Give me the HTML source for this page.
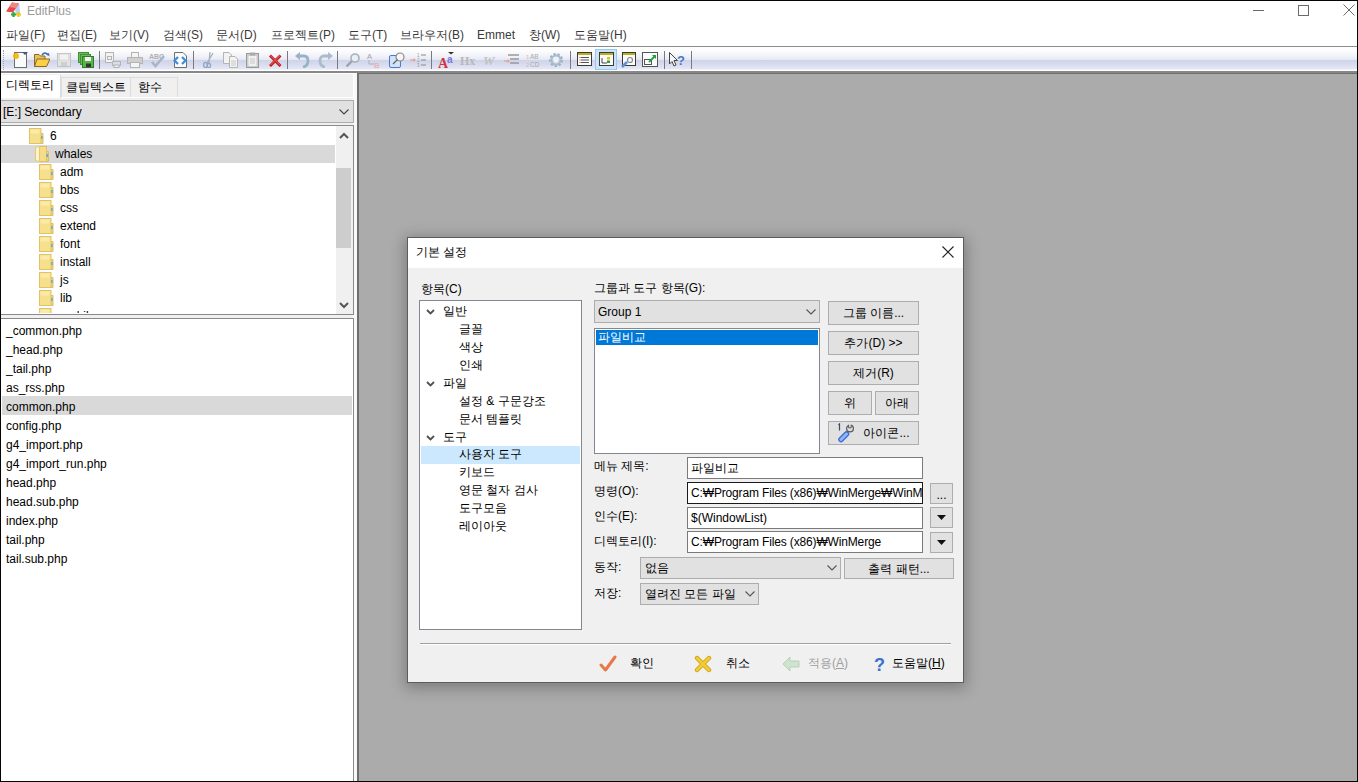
<!DOCTYPE html>
<html><head><meta charset="utf-8">
<style>
*{box-sizing:border-box;margin:0;padding:0}
html,body{width:1358px;height:782px;overflow:hidden;background:#fff;font-family:"Liberation Sans",sans-serif;font-size:12px;color:#000}
.a{position:absolute}
.t{position:absolute;white-space:nowrap;line-height:14px}
.mi{position:absolute;top:28px;line-height:14px;color:#3a3a3a;white-space:nowrap}
.ic{position:absolute;top:52px;width:16px;height:16px}
.sep{position:absolute;top:51px;width:1px;height:18px;background:#7a7a7a}
.fr{position:absolute;left:6px;height:19px;line-height:19px;padding-top:2px;white-space:nowrap}
.tr{position:absolute;height:18px;line-height:18px;padding-top:1px;white-space:nowrap}
.fd{position:absolute;width:15px;height:15px}
.btn{position:absolute;background:#e1e1e1;border:1px solid #adadad;text-align:center;white-space:nowrap}
.lbl{position:absolute;left:594px;white-space:nowrap;line-height:14px}
.fld{position:absolute;left:687px;width:236px;height:22px;background:#fff;border:1px solid #7a7a7a;padding-left:3px;line-height:20px;white-space:nowrap;overflow:hidden}
</style></head><body>
<!-- window border -->
<div class="a" style="left:0;top:0;width:1358px;height:1px;background:#050505"></div>
<div class="a" style="left:0;top:0;width:1px;height:782px;background:#050505"></div>
<div class="a" style="left:0;top:781px;width:1358px;height:1px;background:#050505"></div>
<div class="a" style="left:1357px;top:0;width:1px;height:782px;background:#050505"></div>

<!-- title -->
<svg class="a" style="left:0;top:0" width="24" height="20" viewBox="0 0 24 20"><path d="M15 5 L19.5 4 L20 14 L15.5 14 Z" fill="#b8d4ee"/><path d="M6 11.5 L12 2.5 L19 3.5 L13 12.5 Z" fill="#e84848"/><path d="M9 7 L12 2.5 L19 3.5 L16 8 Z" fill="#f08888"/><path d="M13.5 12 V17 M11 14.5 H16" stroke="#2fa83a" stroke-width="2.2"/><path d="M18.5 12 V17 M16 14.5 H21" stroke="#f0c818" stroke-width="2.2"/></svg>
<div class="t" style="left:27px;top:4px;color:#9a9a9a;font-size:12px">EditPlus</div>
<!-- window controls -->
<div class="a" style="left:1253px;top:10px;width:11px;height:1px;background:#6a6a6a"></div>
<div class="a" style="left:1298px;top:5px;width:11px;height:11px;border:1px solid #6a6a6a"></div>
<svg class="a" style="left:1343px;top:4px" width="12" height="12" viewBox="0 0 12 12"><path d="M0.5 0.5 L11.5 11.5 M11.5 0.5 L0.5 11.5" stroke="#6a6a6a" stroke-width="1"/></svg>

<!-- menu -->
<div class="mi" style="left:6px">파일(F)</div>
<div class="mi" style="left:57px">편집(E)</div>
<div class="mi" style="left:109px">보기(V)</div>
<div class="mi" style="left:163px">검색(S)</div>
<div class="mi" style="left:216px">문서(D)</div>
<div class="mi" style="left:271px">프로젝트(P)</div>
<div class="mi" style="left:348px">도구(T)</div>
<div class="mi" style="left:400px">브라우저(B)</div>
<div class="mi" style="left:477px">Emmet</div>
<div class="mi" style="left:529px">창(W)</div>
<div class="mi" style="left:574px">도움말(H)</div>
<div class="a" style="left:1px;top:46px;width:1356px;height:1px;background:#8c8c8c"></div>

<!-- toolbar -->
<div class="a" style="left:1px;top:47px;width:1356px;height:24px;background:linear-gradient(#ffffff 0%,#fbfbfd 20%,#eceef7 45%,#e6e8f5 52%,#cfd4e8 56%,#d9ddef 75%,#e6e8f5 92%,#ffffff 96%)"></div>
<div class="a" style="left:1px;top:71px;width:1356px;height:2px;background:#878787"></div>
<div class="a" style="left:3px;top:50px;width:1px;height:20px;border-left:1px dotted #9aa"></div>
<div id="tb"><svg class="a" style="left:12px;top:52px" width="16" height="16" viewBox="0 0 16 16"><rect x="2.5" y="0.5" width="12" height="15" fill="#fbfbfb" stroke="#6e6e6e"/><circle cx="4" cy="4" r="3" fill="#f7b400" opacity="0.9"/><path d="M10 0 H16 L13 3 Z" fill="#3a5a8a"/></svg><svg class="a" style="left:34px;top:52px" width="16" height="16" viewBox="0 0 16 16"><path d="M0.5 2.5 H5 L6.5 4 H11 V14.5 H0.5 Z" fill="#e8c25a" stroke="#8a6a2a"/><path d="M3 7 H16 L12.5 14.5 H0.5 Z" fill="#fbd046" stroke="#8a6a2a"/><path d="M8 3 Q11 -1 14 3" stroke="#3a6ab0" stroke-width="1.5" fill="none"/><path d="M12.5 2 L15.5 4.5 L15 1 Z" fill="#3a6ab0"/></svg><svg class="a" style="left:56px;top:52px" width="16" height="16" viewBox="0 0 16 16"><rect x="1.5" y="1.5" width="13" height="13" fill="#e2e2e2" stroke="#c2c2c2"/><rect x="3.5" y="2" width="9" height="6" fill="#f2f2f2" stroke="#d0d0d0" stroke-width="0.6"/><rect x="5" y="10" width="6" height="4" fill="#cfcfcf"/></svg><svg class="a" style="left:78px;top:52px" width="16" height="16" viewBox="0 0 16 16"><rect x="0.5" y="0.5" width="10" height="10" fill="#6bbf5a" stroke="#3e8f35"/><rect x="2.5" y="2.5" width="10" height="10" fill="#6bbf5a" stroke="#3e8f35"/><rect x="4.5" y="4.5" width="11" height="11" fill="#5cb24a" stroke="#2f7d28"/><rect x="7" y="5" width="6" height="4" fill="#f2f2f2"/><rect x="8" y="11.5" width="5" height="3.5" fill="#333"/></svg><div class="sep" style="left:99px"></div><svg class="a" style="left:105px;top:52px" width="16" height="16" viewBox="0 0 16 16"><rect x="0.5" y="0.5" width="8" height="10" fill="#f2f2f2" stroke="#b4b4b4"/><rect x="2.5" y="4.5" width="4" height="3" fill="none" stroke="#b4b4b4"/><rect x="7.5" y="9.5" width="8" height="4" fill="#dedede" stroke="#b4b4b4"/><rect x="9" y="13" width="5" height="2.5" fill="#eee" stroke="#b4b4b4"/></svg><svg class="a" style="left:127px;top:52px" width="16" height="16" viewBox="0 0 16 16"><rect x="4.5" y="0.5" width="7" height="5" fill="#f5f5f5" stroke="#b4b4b4"/><rect x="0.5" y="5.5" width="15" height="6" fill="#cfcfcf" stroke="#b4b4b4"/><rect x="3.5" y="10.5" width="9" height="5" fill="#f5f5f5" stroke="#b4b4b4"/></svg><svg class="a" style="left:149px;top:52px" width="16" height="16" viewBox="0 0 16 16"><text x="0" y="7" font-size="7" font-family="Liberation Sans" font-weight="bold" fill="#b0b0b0">ABC</text><path d="M3 10 L6.5 14 L15 4" stroke="#a8b4c8" stroke-width="2.5" fill="none"/></svg><svg class="a" style="left:172px;top:52px" width="16" height="16" viewBox="0 0 16 16"><path d="M2.5 0.5 H11 L14.5 4 V15.5 H2.5 Z" fill="#fafafa" stroke="#6e6e6e"/><path d="M6 5 L2.5 8.5 L6 12 M10 5 L13.5 8.5 L10 12" stroke="#3b8de0" stroke-width="2.2" fill="none"/></svg><div class="sep" style="left:193px"></div><svg class="a" style="left:201px;top:52px" width="16" height="16" viewBox="0 0 16 16"><path d="M12 1 L6 11 M9 0 L8 11" stroke="#a8b0bc" stroke-width="1.3"/><ellipse cx="4.5" cy="13" rx="1.8" ry="2.6" fill="none" stroke="#8fa6c8" stroke-width="1.4"/><ellipse cx="8" cy="13.5" rx="1.6" ry="2.2" fill="none" stroke="#8fa6c8" stroke-width="1.3"/></svg><svg class="a" style="left:223px;top:52px" width="16" height="16" viewBox="0 0 16 16"><path d="M0.5 0.5 H6 L8.5 3 V11.5 H0.5 Z" fill="#f3f3f3" stroke="#b4b4b4"/><path d="M6.5 4.5 H12 L14.5 7 V15.5 H6.5 Z" fill="#f3f3f3" stroke="#b4b4b4"/><path d="M8 9 H13 M8 11 H13 M8 13 H13" stroke="#c8c8c8"/></svg><svg class="a" style="left:245px;top:52px" width="16" height="16" viewBox="0 0 16 16"><rect x="1.5" y="1.5" width="12" height="14" fill="#cccccc" stroke="#9a9a9a"/><rect x="3.5" y="4" width="8" height="10" fill="#f0f0f0"/><rect x="5" y="0.5" width="5" height="3" fill="#aaa"/><path d="M5 7 H10 M5 9 H10 M5 11 H10" stroke="#c8c8c8"/></svg><svg class="a" style="left:268px;top:52px" width="16" height="16" viewBox="0 0 16 16"><path d="M2 3.5 L12.5 14 M12.5 3.5 L2 14" stroke="#b81818" stroke-width="2.8"/><path d="M2.5 3.5 L12 13 M12 3.5 L2.5 13" stroke="#e84a4a" stroke-width="1.2"/></svg><div class="sep" style="left:287px"></div><svg class="a" style="left:295px;top:52px" width="16" height="16" viewBox="0 0 16 16"><path d="M3 4 H9 Q13 4 13 9 Q13 14 8 15" stroke="#98b2c8" stroke-width="2.8" fill="none"/><path d="M0 4 L5 0 V8 Z" fill="#98b2c8"/></svg><svg class="a" style="left:317px;top:52px" width="16" height="16" viewBox="0 0 16 16"><path d="M13 4 H7 Q3 4 3 9 Q3 14 8 15" stroke="#a8bccc" stroke-width="2.8" fill="none"/><path d="M16 4 L11 0 V8 Z" fill="#a8bccc"/></svg><div class="sep" style="left:337px"></div><svg class="a" style="left:345px;top:52px" width="16" height="16" viewBox="0 0 16 16"><circle cx="10" cy="6" r="4" fill="#e8eef4" stroke="#a8b0b8" stroke-width="1.6"/><path d="M7 9 L1.5 14.5" stroke="#9aa4ae" stroke-width="2.4"/></svg><svg class="a" style="left:366px;top:52px" width="16" height="16" viewBox="0 0 16 16"><text x="1" y="7" font-size="7.5" font-family="Liberation Sans" fill="#a0a0a0">A</text><path d="M3 8 V12 H8" stroke="#b0b0b0" fill="none"/><text x="8" y="15.5" font-size="8" font-family="Liberation Sans" fill="#e8a0a0">B</text></svg><svg class="a" style="left:389px;top:52px" width="16" height="16" viewBox="0 0 16 16"><rect x="0.5" y="3.5" width="11" height="12" rx="1.5" fill="#d2e2f8" stroke="#4a7ac8"/><circle cx="11" cy="5" r="4" fill="#f5f5f5" stroke="#888" stroke-width="1.2"/><path d="M8.5 7.5 L4 12" stroke="#666" stroke-width="1.3"/></svg><svg class="a" style="left:410px;top:52px" width="16" height="16" viewBox="0 0 16 16"><path d="M0 8 H5" stroke="#e8a090" stroke-width="1.2"/><path d="M3.5 6 L6 8 L3.5 10Z" fill="#e8a090"/><text x="7" y="5" font-size="4.5" fill="#999" font-family="Liberation Sans">1</text><text x="7" y="10" font-size="4.5" fill="#999" font-family="Liberation Sans">2</text><text x="7" y="15" font-size="4.5" fill="#999" font-family="Liberation Sans">3</text><path d="M11 3 H16 M11 8 H16 M11 13 H16" stroke="#8a8a8a" stroke-width="1.2"/></svg><div class="sep" style="left:431px"></div><svg class="a" style="left:438px;top:52px" width="16" height="16" viewBox="0 0 16 16"><text x="0" y="15.5" font-size="14" font-family="Liberation Serif" font-weight="bold" fill="#d0343a">A</text><text x="9" y="11" font-size="10" font-family="Liberation Sans" font-weight="bold" fill="#7a78d8">a</text><path d="M10 0 H16 L13 2.5Z" fill="#333"/></svg><svg class="a" style="left:460px;top:52px" width="18" height="16" viewBox="0 0 18 16"><text x="0" y="13" font-size="12" font-family="Liberation Serif" font-weight="bold" fill="#b8b8b8">Hx</text></svg><svg class="a" style="left:483px;top:52px" width="16" height="16" viewBox="0 0 16 16"><text x="0" y="13" font-size="13" font-family="Liberation Serif" font-weight="bold" font-style="italic" fill="#c0c0c0">W</text></svg><svg class="a" style="left:504px;top:52px" width="16" height="16" viewBox="0 0 16 16"><path d="M4 3 H15 M6 7 H15 M6 11 H15" stroke="#999" stroke-width="1.4"/><path d="M0 9 H5" stroke="#e8a090" stroke-width="1.2"/><path d="M3.5 7 L6 9 L3.5 11Z" fill="#e8a090"/></svg><svg class="a" style="left:526px;top:52px" width="16" height="16" viewBox="0 0 16 16"><text x="0" y="7" font-size="6" fill="#e8b0a8" font-family="Liberation Sans">1</text><text x="0" y="14.5" font-size="6" fill="#e8b0a8" font-family="Liberation Sans">2</text><text x="4" y="7" font-size="6.5" fill="#a8a8a8" font-family="Liberation Sans">AB</text><text x="4" y="14.5" font-size="6.5" fill="#a8a8a8" font-family="Liberation Sans">CD</text></svg><svg class="a" style="left:548px;top:52px" width="16" height="16" viewBox="0 0 16 16"><circle cx="8" cy="8" r="5.5" fill="none" stroke="#9cb0c4" stroke-width="3" stroke-dasharray="2.2 1.6"/><circle cx="8" cy="8" r="4.5" fill="none" stroke="#a8bccc" stroke-width="2"/><circle cx="8" cy="8" r="2.5" fill="#eef2f6"/></svg><div class="sep" style="left:570px"></div><svg class="a" style="left:577px;top:52px" width="16" height="16" viewBox="0 0 16 16"><rect x="0.5" y="0.5" width="14" height="13" fill="#fbfbfb" stroke="#3a3a3a"/><rect x="1" y="1" width="13" height="2" fill="#b8b020"/><path d="M4 5.5 H12 M4 8 H12 M4 10.5 H12" stroke="#555"/><path d="M2.5 5.5 H3.5 M2.5 8 H3.5 M2.5 10.5 H3.5" stroke="#d03030"/></svg><div class="a" style="left:595px;top:49px;width:22px;height:21px;background:#cce4f7;border:1px solid #99c9ef"></div><svg class="a" style="left:599px;top:52px" width="16" height="16" viewBox="0 0 16 16"><rect x="0.5" y="0.5" width="14" height="13" fill="#fbfbfb" stroke="#3a3a3a"/><rect x="1" y="1" width="13" height="2" fill="#b8b020"/><path d="M3 6 V11 H8" stroke="#444" fill="none"/><rect x="8" y="5" width="3" height="2.5" fill="#e0c020"/><rect x="8" y="8.5" width="3" height="2.5" fill="#30a030"/></svg><svg class="a" style="left:621px;top:52px" width="16" height="16" viewBox="0 0 16 16"><rect x="1.5" y="0.5" width="13" height="13" fill="#fbfbfb" stroke="#3a3a3a"/><rect x="2" y="1" width="12" height="2" fill="#b8b020"/><path d="M1 15 L6 10" stroke="#5b8fd8" stroke-width="2.6"/><circle cx="9" cy="8" r="2.5" fill="none" stroke="#888" stroke-width="1.2"/></svg><svg class="a" style="left:642px;top:52px" width="16" height="16" viewBox="0 0 16 16"><rect x="0.5" y="0.5" width="15" height="14" fill="#fbfbfb" stroke="#555"/><rect x="2.5" y="7.5" width="7" height="5" fill="none" stroke="#555"/><path d="M7 10 L13 4" stroke="#20a040" stroke-width="1.8"/><path d="M10 3 H14 V7Z" fill="#20a040"/></svg><div class="sep" style="left:664px"></div><svg class="a" style="left:669px;top:52px" width="17" height="16" viewBox="0 0 17 16"><path d="M0.5 0.5 V12 L3 9.5 L5 14 L7 13 L5 8.5 H8.5 Z" fill="#f5f5f5" stroke="#444"/><text x="8" y="13" font-size="13" font-weight="bold" fill="#4a78c8" font-family="Liberation Sans">?</text></svg><div class="sep" style="left:691px"></div></div>

<!-- left panel -->
<div class="a" style="left:1px;top:73px;width:352px;height:708px;background:#f0f0f0;border-top:1px solid #fff"></div>
<!-- tabs -->
<div class="a" style="left:1px;top:97px;width:352px;height:1px;background:#fff"></div>
<div class="a" style="left:61px;top:77px;width:70px;height:20px;background:#f0f0f0;border:1px solid #dcdcdc;border-bottom:none"></div>
<div class="a" style="left:131px;top:77px;width:47px;height:20px;background:#f0f0f0;border:1px solid #dcdcdc;border-bottom:none;border-left:none"></div>
<div class="a" style="left:1px;top:75px;width:60px;height:23px;background:#fff;border-right:1px solid #dcdcdc"></div>
<div class="t" style="left:6px;top:78px">디렉토리</div>
<div class="t" style="left:66px;top:80px">클립텍스트</div>
<div class="t" style="left:138px;top:80px">함수</div>
<!-- drive combo -->
<div class="a" style="left:1px;top:100px;width:353px;height:23px;background:#e1e1e1;border:1px solid #adadad;border-left:none"></div>
<div class="t" style="left:3px;top:105px">[E:] Secondary</div>
<svg class="a" style="left:339px;top:109px" width="10" height="6" viewBox="0 0 10 6"><path d="M0.5 0.5 L5 5 L9.5 0.5" stroke="#444" fill="none" stroke-width="1.1"/></svg>
<!-- tree -->
<div class="a" style="left:1px;top:125px;width:353px;height:190px;background:#fff;border:1px solid #8a8a8a;border-left:none"></div>
<div class="a" style="left:1px;top:145px;width:334px;height:18px;background:#d9d9d9"></div>
<div class="a" style="left:1px;top:126px;width:335px;height:187px;overflow:hidden"><svg class="a" style="left:28px;top:2px" width="15" height="16" viewBox="0 0 15 16"><path d="M11.5 5.5 H14 V15.5 H11.5Z" fill="#ecd27c" stroke="#dcbc62"/><rect x="0.5" y="0.5" width="11.5" height="15" fill="#f7e08c" stroke="#e2c266"/><rect x="1.5" y="1.5" width="9" height="4" fill="#fbeaa8"/><rect x="12.2" y="8" width="1.3" height="3" fill="#4aa8e8"/></svg><div class="tr" style="left:49px;top:0px">6</div><svg class="a" style="left:34px;top:20px" width="15" height="16" viewBox="0 0 15 16"><path d="M11 5.5 H13.5 V15.5 H11Z" fill="#ecd27c" stroke="#dcbc62"/><rect x="4.5" y="0.5" width="7" height="15" fill="#f5dc86" stroke="#e0c066"/><path d="M0.5 1.5 L4.5 0.5 V15.5 L0.5 14.5Z" fill="#fdf2c8" stroke="#e2c878"/><rect x="11.6" y="8" width="1.3" height="3" fill="#4aa8e8"/></svg><div class="tr" style="left:54px;top:18px">whales</div><svg class="a" style="left:38px;top:38px" width="15" height="16" viewBox="0 0 15 16"><path d="M11.5 5.5 H14 V15.5 H11.5Z" fill="#ecd27c" stroke="#dcbc62"/><rect x="0.5" y="0.5" width="11.5" height="15" fill="#f7e08c" stroke="#e2c266"/><rect x="1.5" y="1.5" width="9" height="4" fill="#fbeaa8"/><rect x="12.2" y="8" width="1.3" height="3" fill="#4aa8e8"/></svg><div class="tr" style="left:59px;top:36px">adm</div><svg class="a" style="left:38px;top:56px" width="15" height="16" viewBox="0 0 15 16"><path d="M11.5 5.5 H14 V15.5 H11.5Z" fill="#ecd27c" stroke="#dcbc62"/><rect x="0.5" y="0.5" width="11.5" height="15" fill="#f7e08c" stroke="#e2c266"/><rect x="1.5" y="1.5" width="9" height="4" fill="#fbeaa8"/><rect x="12.2" y="8" width="1.3" height="3" fill="#4aa8e8"/></svg><div class="tr" style="left:59px;top:54px">bbs</div><svg class="a" style="left:38px;top:74px" width="15" height="16" viewBox="0 0 15 16"><path d="M11.5 5.5 H14 V15.5 H11.5Z" fill="#ecd27c" stroke="#dcbc62"/><rect x="0.5" y="0.5" width="11.5" height="15" fill="#f7e08c" stroke="#e2c266"/><rect x="1.5" y="1.5" width="9" height="4" fill="#fbeaa8"/><rect x="12.2" y="8" width="1.3" height="3" fill="#4aa8e8"/></svg><div class="tr" style="left:59px;top:72px">css</div><svg class="a" style="left:38px;top:92px" width="15" height="16" viewBox="0 0 15 16"><path d="M11.5 5.5 H14 V15.5 H11.5Z" fill="#ecd27c" stroke="#dcbc62"/><rect x="0.5" y="0.5" width="11.5" height="15" fill="#f7e08c" stroke="#e2c266"/><rect x="1.5" y="1.5" width="9" height="4" fill="#fbeaa8"/><rect x="12.2" y="8" width="1.3" height="3" fill="#4aa8e8"/></svg><div class="tr" style="left:59px;top:90px">extend</div><svg class="a" style="left:38px;top:110px" width="15" height="16" viewBox="0 0 15 16"><path d="M11.5 5.5 H14 V15.5 H11.5Z" fill="#ecd27c" stroke="#dcbc62"/><rect x="0.5" y="0.5" width="11.5" height="15" fill="#f7e08c" stroke="#e2c266"/><rect x="1.5" y="1.5" width="9" height="4" fill="#fbeaa8"/><rect x="12.2" y="8" width="1.3" height="3" fill="#4aa8e8"/></svg><div class="tr" style="left:59px;top:108px">font</div><svg class="a" style="left:38px;top:128px" width="15" height="16" viewBox="0 0 15 16"><path d="M11.5 5.5 H14 V15.5 H11.5Z" fill="#ecd27c" stroke="#dcbc62"/><rect x="0.5" y="0.5" width="11.5" height="15" fill="#f7e08c" stroke="#e2c266"/><rect x="1.5" y="1.5" width="9" height="4" fill="#fbeaa8"/><rect x="12.2" y="8" width="1.3" height="3" fill="#4aa8e8"/></svg><div class="tr" style="left:59px;top:126px">install</div><svg class="a" style="left:38px;top:146px" width="15" height="16" viewBox="0 0 15 16"><path d="M11.5 5.5 H14 V15.5 H11.5Z" fill="#ecd27c" stroke="#dcbc62"/><rect x="0.5" y="0.5" width="11.5" height="15" fill="#f7e08c" stroke="#e2c266"/><rect x="1.5" y="1.5" width="9" height="4" fill="#fbeaa8"/><rect x="12.2" y="8" width="1.3" height="3" fill="#4aa8e8"/></svg><div class="tr" style="left:59px;top:144px">js</div><svg class="a" style="left:38px;top:164px" width="15" height="16" viewBox="0 0 15 16"><path d="M11.5 5.5 H14 V15.5 H11.5Z" fill="#ecd27c" stroke="#dcbc62"/><rect x="0.5" y="0.5" width="11.5" height="15" fill="#f7e08c" stroke="#e2c266"/><rect x="1.5" y="1.5" width="9" height="4" fill="#fbeaa8"/><rect x="12.2" y="8" width="1.3" height="3" fill="#4aa8e8"/></svg><div class="tr" style="left:59px;top:162px">lib</div><svg class="a" style="left:38px;top:182px" width="15" height="16" viewBox="0 0 15 16"><path d="M11.5 5.5 H14 V15.5 H11.5Z" fill="#ecd27c" stroke="#dcbc62"/><rect x="0.5" y="0.5" width="11.5" height="15" fill="#f7e08c" stroke="#e2c266"/><rect x="1.5" y="1.5" width="9" height="4" fill="#fbeaa8"/><rect x="12.2" y="8" width="1.3" height="3" fill="#4aa8e8"/></svg><div class="tr" style="left:59px;top:180px">mobile</div></div>
<div class="a" style="left:336px;top:126px;width:17px;height:188px;background:#f0f0f0"></div>
<div class="a" style="left:336px;top:168px;width:15px;height:80px;background:#cdcdcd"></div>
<svg class="a" style="left:339px;top:132px" width="10" height="7" viewBox="0 0 10 7"><path d="M1 6 L5 2 L9 6" stroke="#555" fill="none" stroke-width="2"/></svg>
<svg class="a" style="left:339px;top:302px" width="10" height="7" viewBox="0 0 10 7"><path d="M1 1 L5 5 L9 1" stroke="#555" fill="none" stroke-width="2"/></svg>
<!-- file list -->
<div class="a" style="left:1px;top:318px;width:353px;height:463px;background:#fff;border-top:1px solid #8a8a8a;border-right:1px solid #8a8a8a"></div>
<div class="a" style="left:2px;top:396px;width:350px;height:19px;background:#d9d9d9"></div>
<div class="fr" style="top:320px">_common.php</div><div class="fr" style="top:339px">_head.php</div><div class="fr" style="top:358px">_tail.php</div><div class="fr" style="top:377px">as_rss.php</div><div class="fr" style="top:396px">common.php</div><div class="fr" style="top:415px">config.php</div><div class="fr" style="top:434px">g4_import.php</div><div class="fr" style="top:453px">g4_import_run.php</div><div class="fr" style="top:472px">head.php</div><div class="fr" style="top:491px">head.sub.php</div><div class="fr" style="top:510px">index.php</div><div class="fr" style="top:529px">tail.php</div><div class="fr" style="top:548px">tail.sub.php</div>

<!-- splitter -->
<div class="a" style="left:354px;top:73px;width:3px;height:708px;background:#f8f8f8"></div>
<div class="a" style="left:357px;top:73px;width:2px;height:708px;background:#6e6e6e"></div>
<!-- MDI -->
<div class="a" style="left:359px;top:73px;width:998px;height:708px;background:#ababab;border-top:1px solid #6e6e6e"></div>

<div class="a" style="left:407px;top:237px;width:557px;height:446px;background:#f0f0f0;border:1px solid #5c5c5c;box-shadow:0 3px 14px 2px rgba(0,0,0,0.28)"></div><div class="a" style="left:408px;top:238px;width:555px;height:30px;background:#fff"></div><div class="t" style="left:416px;top:245px">기본 설정</div><svg class="a" style="left:942px;top:246px" width="12" height="12" viewBox="0 0 12 12"><path d="M0.5 0.5 L11.5 11.5 M11.5 0.5 L0.5 11.5" stroke="#222" stroke-width="1.1"/></svg><div class="t" style="left:421px;top:282px">항목(C)</div><div class="a" style="left:419px;top:300px;width:163px;height:330px;background:#fff;border:1px solid #828790"></div><div class="a" style="left:421px;top:446px;width:159px;height:18px;background:#cce8ff"></div><svg class="a" style="left:426px;top:309px" width="9" height="6" viewBox="0 0 9 6"><path d="M1 1 L4.5 4.5 L8 1" stroke="#505050" fill="none" stroke-width="1.8"/></svg><div class="t" style="left:443px;top:304px">일반</div><div class="t" style="left:459px;top:322px">글꼴</div><div class="t" style="left:459px;top:340px">색상</div><div class="t" style="left:459px;top:358px">인쇄</div><svg class="a" style="left:426px;top:381px" width="9" height="6" viewBox="0 0 9 6"><path d="M1 1 L4.5 4.5 L8 1" stroke="#505050" fill="none" stroke-width="1.8"/></svg><div class="t" style="left:443px;top:376px">파일</div><div class="t" style="left:459px;top:394px">설정 &amp; 구문강조</div><div class="t" style="left:459px;top:412px">문서 템플릿</div><svg class="a" style="left:426px;top:435px" width="9" height="6" viewBox="0 0 9 6"><path d="M1 1 L4.5 4.5 L8 1" stroke="#505050" fill="none" stroke-width="1.8"/></svg><div class="t" style="left:443px;top:430px">도구</div><div class="t" style="left:459px;top:447px">사용자 도구</div><div class="t" style="left:459px;top:465px">키보드</div><div class="t" style="left:459px;top:483px">영문 철자 검사</div><div class="t" style="left:459px;top:501px">도구모음</div><div class="t" style="left:459px;top:519px">레이아웃</div><div class="t" style="left:594px;top:281px">그룹과 도구 항목(G):</div><div class="a" style="left:594px;top:300px;width:226px;height:23px;background:#e1e1e1;border:1px solid #adadad"></div><div class="t" style="left:598px;top:305px">Group 1</div><svg class="a" style="left:806px;top:309px" width="10" height="6" viewBox="0 0 10 6"><path d="M0.5 0.5 L5 5 L9.5 0.5" stroke="#555" fill="none" stroke-width="1.1"/></svg><div class="a" style="left:594px;top:328px;width:226px;height:126px;background:#fff;border:1px solid #828790"></div><div class="a" style="left:596px;top:330px;width:222px;height:15px;background:#0078d7"></div><div class="t" style="left:598px;top:330px;color:#fff">파일비교</div><div class="btn" style="left:828px;top:301px;width:91px;height:24px;line-height:22px">그룹 이름...</div><div class="btn" style="left:828px;top:331px;width:91px;height:24px;line-height:22px">추가(D) &gt;&gt;</div><div class="btn" style="left:828px;top:361px;width:91px;height:24px;line-height:22px">제거(R)</div><div class="btn" style="left:828px;top:391px;width:44px;height:24px;line-height:22px">위</div><div class="btn" style="left:875px;top:391px;width:44px;height:24px;line-height:22px">아래</div><div class="btn" style="left:828px;top:421px;width:91px;height:24px;line-height:22px;padding-left:26px">아이콘...</div><svg class="a" style="left:836px;top:423px" width="20" height="20" viewBox="0 0 20 20"><path d="M2.5 2 L3.5 1 V7.5" stroke="#3a4a6a" stroke-width="1.2" fill="none"/><path d="M5 16.5 L10.5 11" stroke="#3d6ad8" stroke-width="5.5" stroke-linecap="round"/><path d="M5 16.5 L10.5 11" stroke="#8fb8f0" stroke-width="3" stroke-linecap="round"/><circle cx="14" cy="5.5" r="3.4" fill="#dcdcdc" stroke="#585858" stroke-width="1.2"/><rect x="12.6" y="0.5" width="2.6" height="4.5" fill="#e1e1e1"/><path d="M12.6 1.8 V4.8 H15.2 V1.8" stroke="#585858" stroke-width="1" fill="none"/></svg><div class="lbl" style="top:459px">메뉴 제목:</div><div class="lbl" style="top:484px">명령(O):</div><div class="lbl" style="top:509px">인수(E):</div><div class="lbl" style="top:534px">디렉토리(I):</div><div class="lbl" style="top:560px">동작:</div><div class="lbl" style="top:586px">저장:</div><div class="fld" style="top:457px;border-color:#7a7a7a">파일비교</div><div class="fld" style="top:482px;border-color:#1a1a1a;letter-spacing:-0.15px">C:₩Program Files (x86)₩WinMerge₩WinMerge</div><div class="fld" style="top:507px">$(WindowList)</div><div class="fld" style="top:531px;letter-spacing:-0.15px">C:₩Program Files (x86)₩WinMerge</div><div class="btn" style="left:930px;top:483px;width:23px;height:21px;line-height:22px">...</div><div class="btn" style="left:930px;top:507px;width:23px;height:21px"></div><svg class="a" style="left:937px;top:515px" width="9" height="5" viewBox="0 0 9 5"><path d="M0 0 H9 L4.5 5Z" fill="#111"/></svg><div class="btn" style="left:930px;top:532px;width:23px;height:21px"></div><svg class="a" style="left:937px;top:540px" width="9" height="5" viewBox="0 0 9 5"><path d="M0 0 H9 L4.5 5Z" fill="#111"/></svg><div class="a" style="left:640px;top:557px;width:201px;height:22px;background:#e1e1e1;border:1px solid #adadad"></div><div class="t" style="left:645px;top:561px">없음</div><svg class="a" style="left:827px;top:565px" width="10" height="6" viewBox="0 0 10 6"><path d="M0.5 0.5 L5 5 L9.5 0.5" stroke="#555" fill="none" stroke-width="1.1"/></svg><div class="btn" style="left:844px;top:558px;width:110px;height:21px;line-height:20px">출력 패턴...</div><div class="a" style="left:640px;top:583px;width:119px;height:22px;background:#e1e1e1;border:1px solid #adadad"></div><div class="t" style="left:645px;top:587px">열려진 모든 파일</div><svg class="a" style="left:745px;top:591px" width="10" height="6" viewBox="0 0 10 6"><path d="M0.5 0.5 L5 5 L9.5 0.5" stroke="#555" fill="none" stroke-width="1.1"/></svg><div class="a" style="left:420px;top:643px;width:531px;height:1px;background:#a0a0a0"></div><div class="a" style="left:420px;top:644px;width:531px;height:1px;background:#fff"></div><svg class="a" style="left:599px;top:655px" width="18" height="18" viewBox="0 0 18 18"><path d="M2 10 L6.5 15 L16 2" stroke="#e8784a" stroke-width="3" fill="none" stroke-linecap="round" stroke-linejoin="round"/></svg><div class="t" style="left:630px;top:656px">확인</div><svg class="a" style="left:694px;top:655px" width="18" height="18" viewBox="0 0 18 18"><path d="M3 3 L15 15 M15 3 L3 15" stroke="#c89a10" stroke-width="4.4" stroke-linecap="round"/><path d="M3 3 L15 15 M15 3 L3 15" stroke="#f2cc30" stroke-width="3" stroke-linecap="round"/></svg><div class="t" style="left:726px;top:656px">취소</div><svg class="a" style="left:782px;top:656px" width="18" height="16" viewBox="0 0 18 16"><path d="M1 8 L8 1 V5 H17 V11 H8 V15 Z" fill="#cfe3cf" stroke="#b8d0b8"/></svg><div class="t" style="left:808px;top:656px;color:#a0a0a0">적용(<u>A</u>)</div><svg class="a" style="left:874px;top:655px" width="12" height="18" viewBox="0 0 12 18"><text x="0" y="16" font-size="18" font-weight="bold" fill="#3a70d0" font-family="Liberation Sans">?</text></svg><div class="t" style="left:892px;top:656px">도움말(<u>H</u>)</div>
</body></html>
